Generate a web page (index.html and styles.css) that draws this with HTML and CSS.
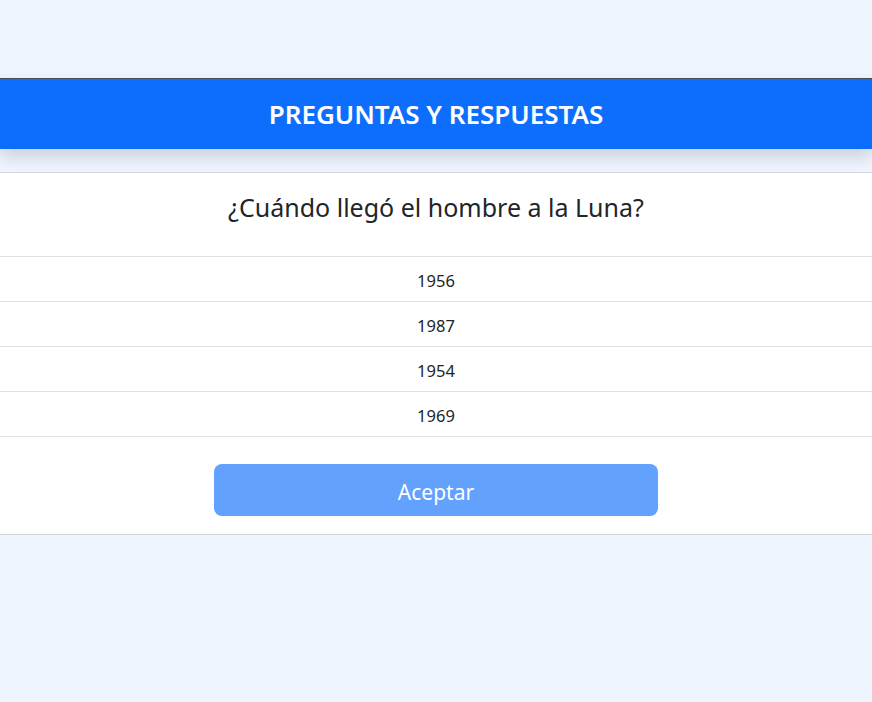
FILE: index.html
```html
<!DOCTYPE html>
<html lang="es">
<head>
<meta charset="utf-8">
<title>Preguntas y respuestas</title>
<link rel="stylesheet" href="styles.css">
</head>
<body>
<main class="page">
  <header class="topbar">
    <h1 class="topbar-title">PREGUNTAS Y RESPUESTAS</h1>
  </header>
  <section class="quiz">
    <h2 class="quiz-question">¿Cuándo llegó el hombre a la Luna?</h2>
    <ul class="quiz-options">
      <li class="quiz-option">1956</li>
      <li class="quiz-option">1987</li>
      <li class="quiz-option">1954</li>
      <li class="quiz-option">1969</li>
    </ul>
    <div class="quiz-actions">
      <button class="btn-accept" disabled>Aceptar</button>
    </div>
  </section>
</main>
</body>
</html>
```

FILE: styles.css
```css
* { box-sizing: border-box; }
html, body {
  margin: 0;
  padding: 0;
  background: #eef5fe;
  font-family: "Noto Sans", "Open Sans", sans-serif;
  color: #212529;
}
.page {
  padding-top: 78px;
}
.topbar {
  background: #0d6efd;
  border-top: 1px solid #4a4f57;
  height: 71px;
  display: flex;
  align-items: center;
  justify-content: center;
  box-shadow: 0 8px 16px rgba(0, 0, 0, 0.15);
  margin-bottom: 23px;
}
.topbar-title {
  margin: 0;
  padding-top: 2px;
  color: #fff;
  font-size: 26px;
  font-weight: 600;
  line-height: 1.2;
}
.quiz {
  background: #fff;
  border-top: 1px solid #d3d7dc;
  border-bottom: 1px solid #d3d7dc;
}
.quiz-question {
  margin: 0;
  padding: 19px 0 34px;
  text-align: center;
  font-size: 25px;
  font-weight: 400;
  line-height: 30px;
  border-bottom: 1px solid #dee2e6;
}
.quiz-options {
  list-style: none;
  margin: 0;
  padding: 0;
}
.quiz-option {
  text-align: center;
  font-size: 16.5px;
  line-height: 24px;
  padding: 12px 0 8px;
  border-bottom: 1px solid #dee2e6;
}
.quiz-actions {
  display: flex;
  justify-content: center;
  padding: 27px 0 18px;
}
.btn-accept {
  width: 444px;
  height: 52px;
  padding: 3px 0 0;
  border: none;
  border-radius: 8px;
  background: #62a1fe;
  color: #fff;
  font-family: inherit;
  font-size: 21px;
}
```
